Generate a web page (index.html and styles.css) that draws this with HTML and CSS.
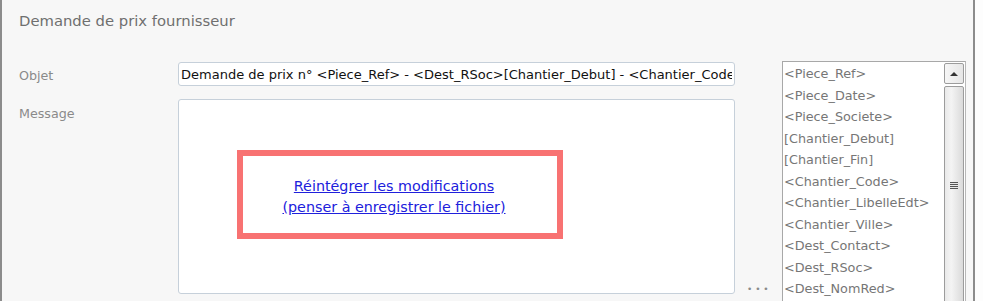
FILE: index.html
```html
<!DOCTYPE html>
<html lang="fr">
<head>
    <meta charset="UTF-8">
    <title>Demande de prix fournisseur</title>
    <link rel="stylesheet" href="styles.css">
</head>
<body>
    <div class="panel">
        <h2 class="title">Demande de prix fournisseur</h2>

        <div class="form">
            <label class="label label-objet">Objet</label>
            <div class="field">
                <input class="input" type="text" value="Demande de prix n° <Piece_Ref> - <Dest_RSoc>[Chantier_Debut] - <Chantier_Code>">
            </div>
            <div class="listbox">
                <ul class="items">
                    <li>&lt;Piece_Ref&gt;</li>
                    <li>&lt;Piece_Date&gt;</li>
                    <li>&lt;Piece_Societe&gt;</li>
                    <li>[Chantier_Debut]</li>
                    <li>[Chantier_Fin]</li>
                    <li>&lt;Chantier_Code&gt;</li>
                    <li>&lt;Chantier_LibelleEdt&gt;</li>
                    <li>&lt;Chantier_Ville&gt;</li>
                    <li>&lt;Dest_Contact&gt;</li>
                    <li>&lt;Dest_RSoc&gt;</li>
                    <li>&lt;Dest_NomRed&gt;</li>
                </ul>
                <div class="scrollbar">
                    <div class="scroll-btn"><span class="arrow"></span></div>
                    <div class="thumb"><span class="grip"></span></div>
                </div>
            </div>

            <label class="label label-message">Message</label>
            <div class="message">
                <div class="notice">
                    <a href="#">Réintégrer les modifications</a>
                    <a href="#">(penser à enregistrer le fichier)</a>
                </div>
            </div>
            <div class="dots">&bull; &bull; &bull;</div>
        </div>
    </div>
</body>
</html>
```

FILE: styles.css
```css
body {
    margin: 0;
    background-color: #fdfdfd;
    font-family: "DejaVu Sans", Tahoma, sans-serif;
    overflow: hidden;
}

.panel {
    width: 971px;
    height: 301px;
    overflow: hidden;
    background-color: #f7f7f7;
    border-left: 2px solid #8c8c8c;
    border-right: 2px solid #8c8c8c;
}

.title {
    margin: 0;
    padding: 12px 0 0 17px;
    height: 29px;
    box-sizing: border-box;
    font-size: 14.8px;
    font-weight: normal;
    color: #6f6f6f;
}

.form {
    display: grid;
    grid-template-columns: 159px 557px 47px 184px;
    grid-template-rows: 24px 200px;
    row-gap: 13px;
    padding: 33px 0 0 17px;
}

.label {
    grid-column: 1;
    font-size: 12.7px;
    color: #8a8a8a;
}

.label-objet { grid-row: 1; padding-top: 6px; }
.label-message { grid-row: 2; padding-top: 7px; }

.field {
    grid-column: 2;
    grid-row: 1;
    min-width: 0;
}

.input {
    display: block;
    width: 100%;
    height: 24px;
    box-sizing: border-box;
    border: 1px solid #c6d0da;
    border-radius: 3px;
    padding: 0 2px;
    font-family: inherit;
    font-size: 13px;
    color: #111;
    background-color: #fff;
    outline: none;
}

.message {
    grid-column: 2;
    grid-row: 2;
    border: 1px solid #c6d0da;
    border-radius: 3px;
    background-color: #fff;
    height: 195px;
    box-sizing: border-box;
    padding: 50px 0 0 58px;
}

.notice {
    box-sizing: border-box;
    width: 326px;
    height: 89px;
    border: 6px solid #f87272;
    background-color: #fff;
    display: flex;
    flex-direction: column;
    align-items: center;
    justify-content: center;
    gap: 5px;
    padding: 3px 12px 0 0;
}

.notice a {
    font-size: 14.3px;
    color: #2020dc;
    text-decoration: underline;
}

.dots {
    grid-column: 3;
    grid-row: 2;
    align-self: end;
    font-size: 9px;
    color: #8a8a8a;
    padding-left: 12px;
    margin-bottom: 5px;
}

.listbox {
    grid-column: 4;
    grid-row: 1 / span 2;
    margin-top: -1px;
    height: 260px;
    display: flex;
    border: 1px solid #a8a8a8;
    border-right-color: #b8b8b8;
    background-color: #fff;
    overflow: hidden;
}

.items {
    flex: 1;
    list-style: none;
    margin: 0;
    padding: 1px 0 0 1px;
}

.items li {
    font-size: 12.8px;
    line-height: 21.5px;
    color: #767676;
    white-space: nowrap;
}

.scrollbar {
    width: 20px;
    margin: 1px 1px 0 0;
    display: flex;
    flex-direction: column;
    gap: 2px;
}

.scroll-btn {
    height: 21px;
    border: 1px solid #9c9c9c;
    border-radius: 2px;
    background: linear-gradient(to right, #f6f6f6, #e6e6e6);
    box-sizing: border-box;
    display: flex;
    align-items: center;
    justify-content: center;
}

.arrow {
    width: 0;
    height: 0;
    border-left: 4px solid transparent;
    border-right: 4px solid transparent;
    border-bottom: 4px solid #333;
}

.thumb {
    flex: 1;
    border: 1px solid #9c9c9c;
    border-radius: 2px;
    background: linear-gradient(to right, #e9e9e9, #f4f4f4 35%, #dadada);
    position: relative;
}

.grip {
    position: absolute;
    left: 5px;
    top: 95px;
    width: 8px;
    height: 7px;
    background: repeating-linear-gradient(to bottom, #555 0, #555 1px, #e8e8e8 1px, #e8e8e8 2px);
}
```
